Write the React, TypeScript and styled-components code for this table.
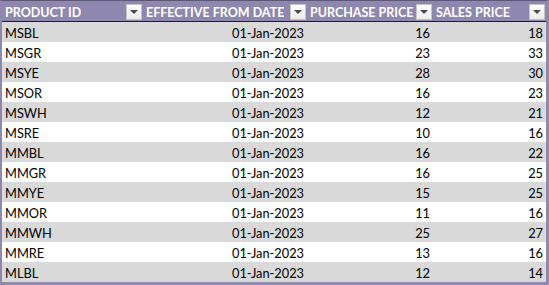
import React from "react";
import styled, { createGlobalStyle } from "styled-components";

const Global = createGlobalStyle`
  html, body { margin: 0; padding: 0; background: #ffffff; }
  body { font-family: Lato, "Liberation Sans", sans-serif; }
`;

const Table = styled.div`
  width: 549px;
  box-sizing: border-box;
  border-top: 1px solid #5d577a;
  border-left: 2px solid #8e88ae;
  border-right: 3px solid #8e88ae;
  border-bottom: 3px solid #8e88ae;
  display: grid;
  grid-template-columns: 141px 164px 126px 113px;
`;

const HeaderCell = styled.div`
  height: 20px;
  background: #8e88ae;
  border-bottom: 1px solid #1f1d2a;
  display: flex;
  align-items: center;
  justify-content: space-between;
  padding: 0 1px 0 3px;
  color: #ffffff;
  font-weight: 700;
  font-size: 12.5px;
  white-space: nowrap;
  overflow: hidden;
`;

const HeaderLabel = styled.span`
  min-width: 0;
  overflow: hidden;
  padding-top: 2px;
`;

const FilterButton = styled.div`
  width: 16px;
  height: 16px;
  box-sizing: border-box;
  background: linear-gradient(#ffffff, #ececec);
  border: 1px solid #c4c4c4;
  display: flex;
  align-items: center;
  justify-content: center;
  flex: none;
  margin-top: 2px;
`;

const Arrow = styled.div`
  width: 0;
  height: 0;
  border-left: 4px solid transparent;
  border-right: 4px solid transparent;
  border-top: 4px solid #4a4a4a;
`;

const Cell = styled.div<{ $alt: boolean; $right?: boolean }>`
  height: 20px;
  background: ${(p) => (p.$alt ? "#d9d9d9" : "#ffffff")};
  display: flex;
  align-items: center;
  justify-content: ${(p) => (p.$right ? "flex-end" : "flex-start")};
  padding: ${(p) => (p.$right ? "2px 3px 0 0" : "2px 0 0 3px")};
  box-sizing: border-box;
  color: #000000;
  font-size: 12.8px;
  white-space: nowrap;
`;

const rows: [string, number, number][] = [
  ["MSBL", 16, 18],
  ["MSGR", 23, 33],
  ["MSYE", 28, 30],
  ["MSOR", 16, 23],
  ["MSWH", 12, 21],
  ["MSRE", 10, 16],
  ["MMBL", 16, 22],
  ["MMGR", 16, 25],
  ["MMYE", 15, 25],
  ["MMOR", 11, 16],
  ["MMWH", 25, 27],
  ["MMRE", 13, 16],
  ["MLBL", 12, 14],
];

const headers = ["PRODUCT ID", "EFFECTIVE FROM DATE", "PURCHASE PRICE", "SALES PRICE"];

export default function App() {
  return (
    <>
      <Global />
      <Table>
        {headers.map((h) => (
          <HeaderCell key={h}>
            <HeaderLabel>{h}</HeaderLabel>
            <FilterButton>
              <Arrow />
            </FilterButton>
          </HeaderCell>
        ))}
        {rows.map(([id, pp, sp], i) => {
          const alt = i % 2 === 0;
          return (
            <React.Fragment key={id}>
              <Cell $alt={alt}>{id}</Cell>
              <Cell $alt={alt} $right>01-Jan-2023</Cell>
              <Cell $alt={alt} $right>{pp}</Cell>
              <Cell $alt={alt} $right>{sp}</Cell>
            </React.Fragment>
          );
        })}
      </Table>
    </>
  );
}
